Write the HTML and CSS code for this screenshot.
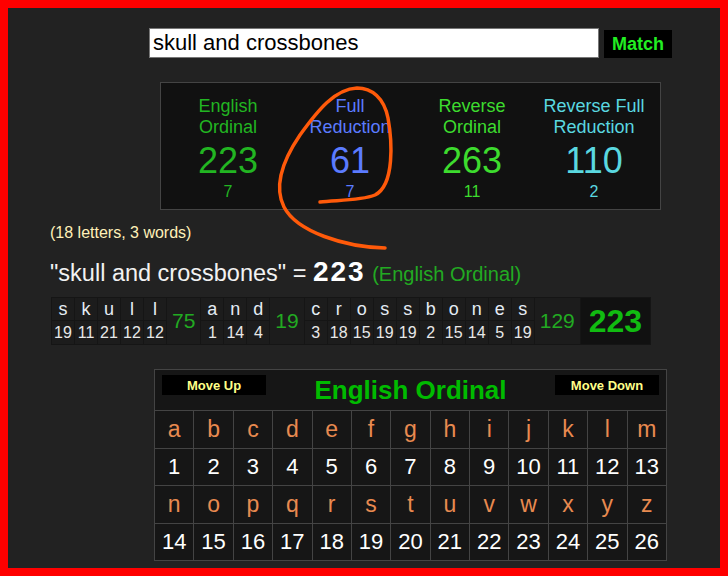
FILE: index.html
```html
<!DOCTYPE html>
<html>
<head>
<meta charset="utf-8">
<title>Gematria</title>
<link rel="stylesheet" href="styles.css">
</head>
<body>
<div class="frame">
  <div class="page">
    <div class="search">
      <input class="phrase-input" type="text" value="skull and crossbones">
      <button class="match">Match</button>
    </div>

    <div class="results">
      <div class="cipher eo"><div class="name">English<br>Ordinal</div><div class="val">223</div><div class="red">7</div></div>
      <div class="cipher fr"><div class="name">Full<br>Reduction</div><div class="val">61</div><div class="red">7</div></div>
      <div class="cipher ro"><div class="name">Reverse<br>Ordinal</div><div class="val">263</div><div class="red">11</div></div>
      <div class="cipher rfr"><div class="name">Reverse Full<br>Reduction</div><div class="val">110</div><div class="red">2</div></div>
    </div>

    <div class="count">(18 letters, 3 words)</div>
    <div class="phrase">"skull and crossbones" = <b class="total">223</b> <span class="cname">(English Ordinal)</span></div>

    <table class="breakdown">
      <tr class="lt">
        <td>s</td><td>k</td><td>u</td><td>l</td><td>l</td><td class="sum" rowspan="2">75</td>
        <td>a</td><td>n</td><td>d</td><td class="sum" rowspan="2">19</td>
        <td>c</td><td>r</td><td>o</td><td>s</td><td>s</td><td>b</td><td>o</td><td>n</td><td>e</td><td>s</td><td class="sum" rowspan="2">129</td>
        <td class="grand" rowspan="2">223</td>
      </tr>
      <tr class="nm">
        <td>19</td><td>11</td><td>21</td><td>12</td><td>12</td>
        <td>1</td><td>14</td><td>4</td>
        <td>3</td><td>18</td><td>15</td><td>19</td><td>19</td><td>2</td><td>15</td><td>14</td><td>5</td><td>19</td>
      </tr>
    </table>

    <table class="chart">
      <tr>
        <th colspan="13">
          <div class="chart-head">
            <button class="move">Move Up</button>
            <span class="chart-title">English Ordinal</span>
            <button class="move">Move Down</button>
          </div>
        </th>
      </tr>
      <tr class="ch-l"><td>a</td><td>b</td><td>c</td><td>d</td><td>e</td><td>f</td><td>g</td><td>h</td><td>i</td><td>j</td><td>k</td><td>l</td><td>m</td></tr>
      <tr class="ch-n"><td>1</td><td>2</td><td>3</td><td>4</td><td>5</td><td>6</td><td>7</td><td>8</td><td>9</td><td>10</td><td>11</td><td>12</td><td>13</td></tr>
      <tr class="ch-l"><td>n</td><td>o</td><td>p</td><td>q</td><td>r</td><td>s</td><td>t</td><td>u</td><td>v</td><td>w</td><td>x</td><td>y</td><td>z</td></tr>
      <tr class="ch-n"><td>14</td><td>15</td><td>16</td><td>17</td><td>18</td><td>19</td><td>20</td><td>21</td><td>22</td><td>23</td><td>24</td><td>25</td><td>26</td></tr>
    </table>
  </div>

  <svg class="annot" width="728" height="576" viewBox="0 0 728 576">
    <path d="M320,202 C335,200 360,201 375,195 C395,185 392,140 388,118 C384,98 372,88 357,88 C335,89 318,110 300,135 C283,160 273,185 284,207 C297,232 345,247 385,248" fill="none" stroke="#ff5a0a" stroke-width="3.5" stroke-linecap="round"/>
  </svg>
</div>
</body>
</html>
```

FILE: styles.css
```css
html, body {
  margin: 0;
  padding: 0;
  width: 728px;
  height: 576px;
  overflow: hidden;
  background: #f00;
}

.frame {
  position: relative;
  box-sizing: border-box;
  width: 728px;
  height: 576px;
  border: 8px solid #f00;
  background: #222;
  overflow: hidden;
}

.page {
  width: 721px;
  margin-left: 42px;
  font-family: "Liberation Sans", Arial, sans-serif;
  color: #eee;
}

.search {
  display: flex;
  justify-content: center;
  align-items: flex-start;
  gap: 5px;
  padding-top: 20px;
}

.phrase-input {
  box-sizing: border-box;
  width: 450px;
  height: 30px;
  margin: 0;
  padding: 0 3px;
  border: 1px solid #777;
  background: #fff;
  color: #000;
  font: 22px "Liberation Sans", Arial, sans-serif;
}

.match {
  box-sizing: border-box;
  width: 68px;
  height: 28px;
  margin: 2px 0 0;
  padding: 0;
  border: none;
  background: #000;
  color: #22ee22;
  font: bold 18px "Liberation Sans", Arial, sans-serif;
}

.results {
  box-sizing: border-box;
  width: 501px;
  height: 128px;
  margin: 24px auto 0;
  padding: 13px 6px 0;
  border: 1px solid #444;
  background: #111;
  display: grid;
  grid-template-columns: repeat(4, 122px);
  text-align: center;
}

.name {
  font-size: 18px;
  line-height: 21px;
}

.val {
  margin-top: 3px;
  font-size: 36px;
  line-height: 40px;
}

.red {
  margin-top: 2px;
  font-size: 16px;
  line-height: 18px;
}

.eo { color: #22b522; }
.fr { color: #5b7bff; }
.ro { color: #3ddc2e; }
.rfr { color: #5ad8e0; }

.count {
  margin-top: 14px;
  font-size: 16px;
  line-height: 18px;
  color: #fff0b8;
}

.phrase {
  margin-top: 16px;
  font-size: 23.5px;
  line-height: 27px;
  color: #f2f2f2;
}

.total {
  font-size: 28px;
  letter-spacing: 2px;
  color: #fff;
}

.cname {
  font-size: 20px;
  color: #22aa22;
}

.breakdown {
  margin: 9px 0 0 1px;
  border-collapse: collapse;
  background: #1c1c1c;
  text-align: center;
}

.breakdown td {
  border: 1px solid #151515;
  padding: 0 2px;
}

.breakdown .lt td {
  width: 18px;
  height: 22px;
  font-size: 18px;
  line-height: 22px;
  color: #e4ecf4;
}

.breakdown .nm td {
  height: 23px;
  font-size: 16px;
  line-height: 23px;
  color: #e8e8e8;
}

.breakdown td.sum {
  width: auto;
  padding: 0 5px;
  font-size: 21px;
  color: #22aa22;
}

.breakdown td.grand {
  width: auto;
  padding: 0 8px;
  background: #111;
  font-size: 32px;
  font-weight: bold;
  color: #11bb11;
}

.chart {
  width: 513px;
  margin: 24px auto 0;
  table-layout: fixed;
  border-collapse: collapse;
  background: #161616;
  text-align: center;
}

.chart th,
.chart td {
  border: 1px solid #444;
  padding: 0;
}

.chart th {
  height: 40px;
}

.chart-head {
  display: flex;
  justify-content: space-between;
  align-items: center;
  padding: 0 7px;
}

.move {
  align-self: flex-start;
  margin-top: 5px;
  width: 104px;
  height: 20px;
  padding: 0;
  border: none;
  background: #000;
  color: #ffff88;
  font: bold 13px "Liberation Sans", Arial, sans-serif;
}

.chart-title {
  font-size: 26px;
  font-weight: bold;
  color: #00bb00;
  line-height: 40px;
}

.ch-l td {
  height: 37px;
  font-size: 23px;
  color: #e88a50;
}

.ch-n td {
  height: 36px;
  font-size: 22px;
  color: #fff;
}

.annot {
  position: absolute;
  left: -8px;
  top: -8px;
  pointer-events: none;
}
```
